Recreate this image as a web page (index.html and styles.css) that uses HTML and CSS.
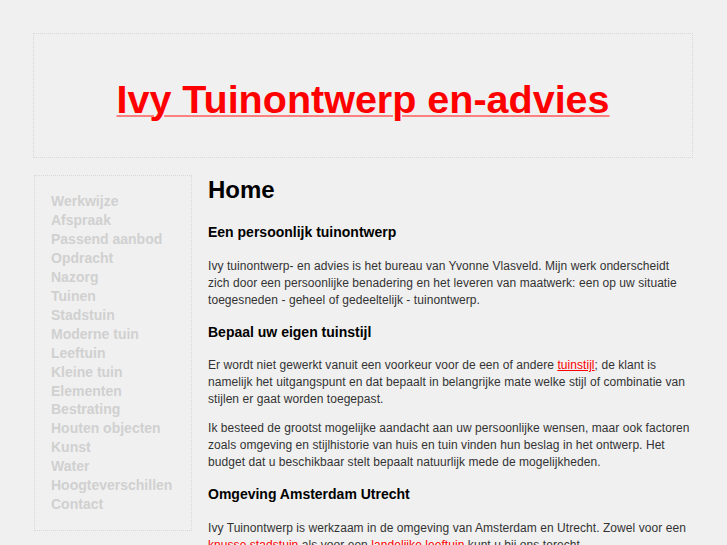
FILE: index.html
```html
<!DOCTYPE html>
<html lang="nl">
<head>
<meta charset="utf-8">
<title>Ivy Tuinontwerp en-advies</title>
<link rel="stylesheet" href="styles.css">
</head>
<body>
<div class="page">
  <header class="header">
    <h1 class="site-title"><a href="#">Ivy Tuinontwerp en-advies</a></h1>
  </header>
  <div class="columns">
    <nav class="sidebar">
      <ul class="menu">
        <li><a href="#">Werkwijze</a></li>
        <li><a href="#">Afspraak</a></li>
        <li><a href="#">Passend aanbod</a></li>
        <li><a href="#">Opdracht</a></li>
        <li><a href="#">Nazorg</a></li>
        <li><a href="#">Tuinen</a></li>
        <li><a href="#">Stadstuin</a></li>
        <li><a href="#">Moderne tuin</a></li>
        <li><a href="#">Leeftuin</a></li>
        <li><a href="#">Kleine tuin</a></li>
        <li><a href="#">Elementen</a></li>
        <li><a href="#">Bestrating</a></li>
        <li><a href="#">Houten objecten</a></li>
        <li><a href="#">Kunst</a></li>
        <li><a href="#">Water</a></li>
        <li><a href="#">Hoogteverschillen</a></li>
        <li><a href="#">Contact</a></li>
      </ul>
    </nav>
    <main class="content">
      <h2 class="page-title">Home</h2>
      <h3 class="section-title">Een persoonlijk tuinontwerp</h3>
      <p>Ivy tuinontwerp- en advies is het bureau van Yvonne Vlasveld. Mijn werk onderscheidt zich door een persoonlijke benadering en het leveren van maatwerk: een op uw situatie toegesneden - geheel of gedeeltelijk - tuinontwerp.</p>
      <h3 class="section-title">Bepaal uw eigen tuinstijl</h3>
      <p>Er wordt niet gewerkt vanuit een voorkeur voor de een of andere <a class="inline-link" href="#">tuinstijl</a>; de klant is namelijk het uitgangspunt en dat bepaalt in belangrijke mate welke stijl of combinatie van stijlen er gaat worden toegepast.</p>
      <p>Ik besteed de grootst mogelijke aandacht aan uw persoonlijke wensen, maar ook factoren zoals omgeving en stijlhistorie van huis en tuin vinden hun beslag in het ontwerp. Het budget dat u beschikbaar stelt bepaalt natuurlijk mede de mogelijkheden.</p>
      <h3 class="section-title">Omgeving Amsterdam Utrecht</h3>
      <p>Ivy Tuinontwerp is werkzaam in de omgeving van Amsterdam en Utrecht. Zowel voor een <a class="inline-link" href="#">knusse stadstuin</a> als voor een <a class="inline-link" href="#">landelijke leeftuin</a> kunt u bij ons terecht.</p>
    </main>
  </div>
</div>
</body>
</html>
```
FILE: styles.css
```css
html, body {
  margin: 0;
  padding: 0;
  background: #f0f0f0;
}
body {
  font-family: "Liberation Sans", Arial, sans-serif;
  color: #333;
  font-size: 12px;
}
.page {
  width: 660px;
  padding: 33px 0 0 33px;
}
.header {
  box-sizing: border-box;
  height: 125px;
  border: 1px dotted #d8d8d8;
  display: flex;
  align-items: center;
  justify-content: center;
}
.site-title {
  margin: 0;
  font-size: 39.5px;
  font-weight: bold;
  line-height: 1;
  padding-top: 8px;
}
.site-title a {
  color: #ff0000;
  text-decoration: underline;
  text-decoration-color: #ff8080;
  text-decoration-thickness: 2px;
  text-underline-offset: 2px;
}
.columns {
  display: flex;
  margin-top: 17px;
  align-items: flex-start;
}
.sidebar {
  box-sizing: border-box;
  width: 158px;
  margin-left: 1px;
  border: 1px dotted #d8d8d8;
  padding: 16px 0 16px 16px;
}
.menu {
  list-style: none;
  margin: 0;
  padding: 0;
}
.menu li {
  font-size: 14px;
  font-weight: bold;
  line-height: 18.95px;
}
.menu a {
  color: #d0d0d0;
  text-decoration: none;
}
.content {
  flex: 1;
  padding-left: 16px;
  padding-top: 1px;
}
.page-title {
  margin: 0 0 20px;
  font-size: 24px;
  font-weight: bold;
  color: #000;
  line-height: 28px;
}
.section-title {
  margin: 0 0 16.5px;
  font-size: 14px;
  font-weight: bold;
  color: #000;
  line-height: 17px;
}
.content p {
  margin: 0 0 12px;
  line-height: 17px;
  letter-spacing: 0.06px;
}
.content p + .section-title {
  margin-top: 15px;
}
.inline-link {
  color: #ff0000;
}
```
